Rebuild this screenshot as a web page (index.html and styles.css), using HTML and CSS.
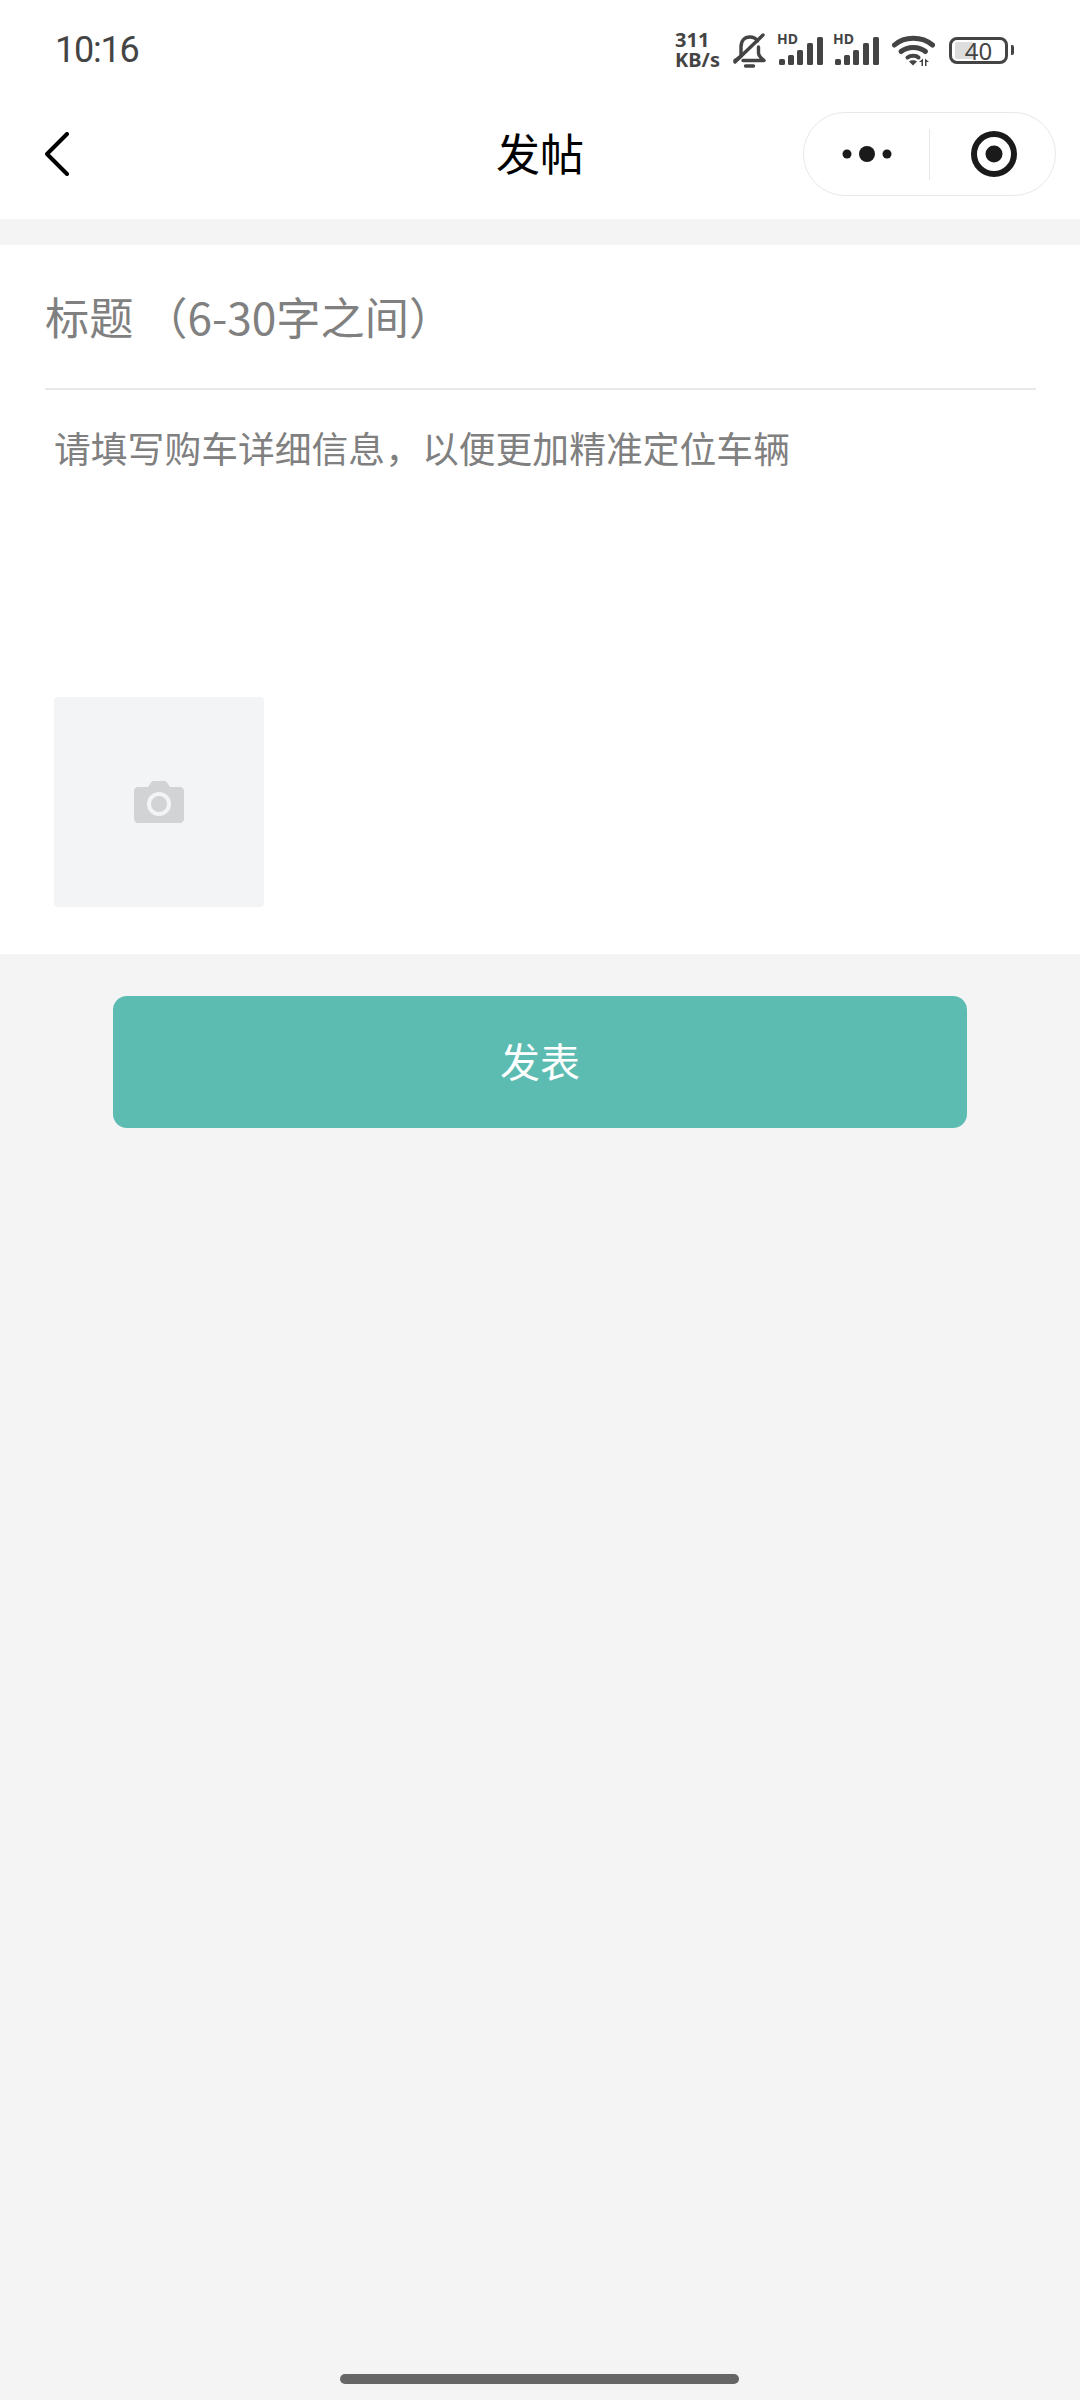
FILE: index.html
```html
<!DOCTYPE html>
<html lang="zh-CN">
<head>
    <meta charset="UTF-8">
    <meta name="viewport" content="width=device-width,initial-scale=1">
    <title>发帖</title>
    <link rel="stylesheet" href="styles.css">
</head>
<body>
    <div class="page">
        <div class="status-bar">
            <span class="time">10:16</span>
            <div class="status-icons">
                <div class="net-speed">311 KB/s</div>
                <svg class="icon-bell" width="33" height="35" viewBox="0 0 33 35" fill="none" stroke="#444" stroke-width="3.4" stroke-linecap="round" stroke-linejoin="round">
                    <path d="M8 23V14C8 8 11 4 17 4C20 4 23 5.500 24.500 8"/>
                    <path d="M25.500 14V20C25.500 23 28 25 31 27.500H10"/>
                    <path d="M8 23C6 25 4 26 2 27.500"/>
                    <path d="M2 29L30 2"/>
                    <path d="M12.500 33H20.500"/>
                </svg>
                <div class="signal">
                    <span class="hd">HD</span>
                    <svg class="icon-signal" width="46" height="29" viewBox="0 0 46 29">
                        <rect x="2" y="23" width="6" height="6" rx="1.500"/>
                        <rect x="11" y="19" width="6" height="10" rx="1.500"/>
                        <rect x="20" y="14" width="6" height="15" rx="1.500"/>
                        <rect x="30" y="7" width="6" height="22" rx="1.500"/>
                        <rect x="40" y="1" width="6" height="28" rx="1.500"/>
                    </svg>
                </div>
                <div class="signal">
                    <span class="hd">HD</span>
                    <svg class="icon-signal" width="46" height="29" viewBox="0 0 46 29">
                        <rect x="2" y="23" width="6" height="6" rx="1.500"/>
                        <rect x="11" y="19" width="6" height="10" rx="1.500"/>
                        <rect x="20" y="14" width="6" height="15" rx="1.500"/>
                        <rect x="30" y="7" width="6" height="22" rx="1.500"/>
                        <rect x="40" y="1" width="6" height="28" rx="1.500"/>
                    </svg>
                </div>
                <svg class="icon-wifi" width="43" height="32" viewBox="0 0 43 32" fill="none" stroke="#444" stroke-linecap="round">
                    <path d="M2.500 11C12.500 2 30 2 40.500 11" stroke-width="5"/>
                    <path d="M9 17.500C15.500 12 27 12 33.500 17.500" stroke-width="5"/>
                    <path d="M15.500 23.500C18.500 21 24 21 26.500 23.500" stroke-width="4"/>
                    <path d="M17 27.500L21 31.500L25 27.500C23 25.800 19 25.800 17 27.500Z" fill="#444" stroke="none"/>
                    <path d="M31 28L27 28L31 24.500Z M33 24.500L37 28L33 28Z M31 28V32H29.500V28Z M33 28H34.500V32H33Z" fill="#444" stroke="none"/>
                </svg>
                <div class="battery">
                    <div class="battery-body">
                        <div class="battery-fill"></div>
                        <span class="battery-num">40</span>
                    </div>
                    <div class="battery-tip"></div>
                </div>
            </div>
        </div>

        <div class="nav-bar">
            <svg class="nav-back" width="24" height="44" viewBox="0 0 24 44" fill="none" stroke="#000" stroke-width="4" stroke-linecap="round" stroke-linejoin="round">
                <path d="M22 2L2 22L22 42"/>
            </svg>
            <h1 class="nav-title">发帖</h1>
            <div class="capsule">
                <div class="capsule-btn">
                    <svg width="50" height="18" viewBox="0 0 50 18" fill="#1a1a1a">
                        <circle cx="5" cy="9" r="4.500"/>
                        <circle cx="25" cy="9" r="8"/>
                        <circle cx="45" cy="9" r="4.500"/>
                    </svg>
                </div>
                <div class="capsule-line"></div>
                <div class="capsule-btn capsule-target">
                    <svg width="48" height="48" viewBox="0 0 48 48">
                        <circle cx="24" cy="24" r="20" fill="none" stroke="#1a1a1a" stroke-width="6"/>
                        <circle cx="24" cy="24" r="8.500" fill="#1a1a1a"/>
                    </svg>
                </div>
            </div>
        </div>

        <div class="form-card">
            <div class="title-field">标题 （6-30字之间）</div>
            <div class="detail-field">请填写购车详细信息，以便更加精准定位车辆</div>
            <div class="photo-add">
                <svg width="50" height="42" viewBox="0 0 50 42">
                    <path fill="#d2d3d5" d="M4 6H14L17 1.500C17.500 .6 18.500 0 19.500 0H30.500C31.500 0 32.500 .6 33 1.500L36 6H46C48.200 6 50 7.800 50 10V38C50 40.200 48.200 42 46 42H4C1.800 42 0 40.200 0 38V10C0 7.800 1.800 6 4 6Z"/>
                    <circle cx="25" cy="23" r="10" fill="none" stroke="#f3f4f6" stroke-width="4"/>
                </svg>
            </div>
        </div>

        <button class="submit-btn">发表</button>

        <div class="home-bar"></div>
    </div>
</body>
</html>
```

FILE: styles.css
```css
* {
    margin: 0;
    padding: 0;
    box-sizing: border-box;
}

body {
    font-family: 'Noto Sans CJK SC', 'Noto Sans', sans-serif;
    background-color: #f4f4f5;
}

.page {
    display: flex;
    flex-direction: column;
    height: 2400px;
    overflow: hidden;
}

.status-bar {
    display: flex;
    align-items: center;
    justify-content: space-between;
    height: 89px;
    padding: 11px 66px 0 55px;
    background-color: #fff;
}

.time {
    font-family: Roboto, sans-serif;
    font-size: 36px;
    font-weight: 400;
    letter-spacing: -1.200px;
    color: #444;
}

.status-icons {
    display: flex;
    align-items: center;
}

.net-speed {
    width: 49px;
    margin-right: 9px;
    font-family: 'Noto Sans', sans-serif;
    font-size: 20px;
    font-weight: 700;
    line-height: 20px;
    color: #444;
}

.icon-bell {
    margin-right: 11px;
}

.signal {
    display: flex;
    flex-direction: column;
    justify-content: flex-end;
    position: relative;
    width: 46px;
    height: 29px;
    margin-right: 10px;
}

.icon-signal {
    display: block;
    fill: #444;
}

.hd {
    position: absolute;
    left: 0;
    top: -4px;
    font-family: 'Noto Sans', sans-serif;
    font-size: 14px;
    font-weight: 700;
    line-height: 14px;
    color: #444;
}

.icon-wifi {
    margin: 0 14px 0 3px;
}

.battery {
    display: flex;
    align-items: center;
    gap: 3px;
}

.battery-body {
    display: flex;
    align-items: center;
    justify-content: center;
    position: relative;
    width: 59px;
    height: 27px;
    border: 3px solid #444;
    border-radius: 8px;
}

.battery-fill {
    position: absolute;
    left: 3px;
    top: 2px;
    bottom: 2px;
    width: 19px;
    background-color: #ddd;
    border-radius: 2px;
}

.battery-num {
    position: relative;
    font-family: 'Noto Sans', sans-serif;
    font-size: 24px;
    line-height: 21px;
    color: #444;
}

.battery-tip {
    width: 3px;
    height: 10px;
    background-color: #444;
    border-radius: 0 2px 2px 0;
}

.nav-bar {
    display: grid;
    grid-template-columns: 1fr auto 1fr;
    align-items: center;
    height: 130px;
    padding: 0 24px;
    background-color: #fff;
}

.nav-back {
    margin-left: 21px;
}

.nav-title {
    padding-bottom: 4px;
    font-size: 44px;
    font-weight: 400;
    color: #000;
}

.capsule {
    display: flex;
    align-items: center;
    justify-self: end;
    width: 253px;
    height: 84px;
    border: 1px solid #e8e8e8;
    border-radius: 42px;
}

.capsule-btn {
    display: flex;
    align-items: center;
    justify-content: center;
    flex: 1;
}

.capsule-target svg {
    margin-left: 3px;
}

.capsule-line {
    width: 1px;
    height: 51px;
    background-color: #e8e8e8;
}

.form-card {
    margin-top: 26px;
    height: 709px;
    background-color: #fff;
}

.title-field {
    margin: 0 44px 0 45px;
    height: 145px;
    font-size: 44.200px;
    line-height: 142px;
    color: #808080;
    border-bottom: 2px solid #e9e9e9;
}

.detail-field {
    padding-left: 54px;
    margin-top: 32px;
    height: 275px;
    font-size: 36.800px;
    line-height: 50px;
    color: #808080;
}

.photo-add {
    display: flex;
    align-items: center;
    justify-content: center;
    width: 210px;
    height: 210px;
    margin-left: 54px;
    background-color: #f3f4f6;
    border-radius: 4px;
}

.submit-btn {
    height: 132px;
    margin: 42px 113px 0;
    padding-bottom: 5px;
    font-family: inherit;
    font-size: 40px;
    color: #fff;
    background-color: #5cbcb2;
    border: none;
    border-radius: 14px;
}

.home-bar {
    width: 399px;
    height: 10px;
    margin: auto 0 16px 340px;
    background-color: #666;
    border-radius: 5px;
}
```
